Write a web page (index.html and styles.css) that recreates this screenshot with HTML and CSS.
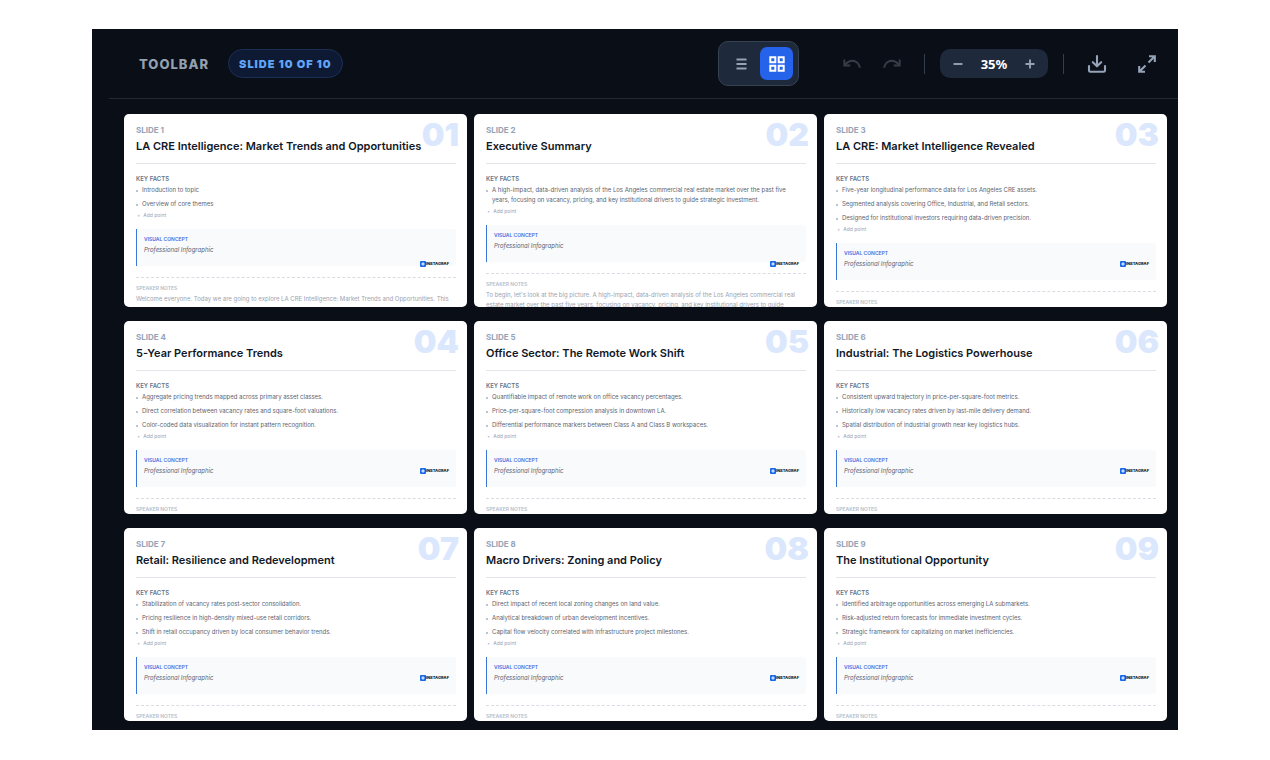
FILE: index.html
```html
<!DOCTYPE html>
<html lang="en">
<head>
<meta charset="utf-8">
<title>Slide overview</title>
<link rel="stylesheet" href="styles.css">
</head>
<body>
<svg class="defs" aria-hidden="true">
  <symbol id="brand" viewBox="0 0 6 6"><rect width="6" height="6" rx="1" fill="#1769e8"/><path d="M3 1.3v3.4M1.3 3h3.4" stroke="#fff" stroke-width="1"/></symbol>
</svg>
<main class="app">
  <header class="toolbar">
    <span class="toolbar-title">TOOLBAR</span>
    <span class="counter">SLIDE 10 OF 10</span>
    <div class="view-switch">
      <button class="view" type="button" aria-label="List view"><svg width="18" height="18" viewBox="0 0 18 18"><path d="M4.500 4.500h10M4.500 9h10M4.500 13.500h10" stroke="currentColor" stroke-width="1.900"/></svg></button>
      <button class="view active" type="button" aria-label="Grid view"><svg width="18" height="18" viewBox="0 0 18 18" fill="none" stroke="currentColor" stroke-width="2"><path d="M2.300 2.300h5v5H2.300zM10.700 2.300h5v5h-5zM2.300 10.700h5v5H2.300zM10.700 10.700h5v5h-5z"/></svg></button>
    </div>
    <div class="history">
      <button class="icon dim" type="button" aria-label="Undo"><svg width="20" height="20" viewBox="0 0 20 20" fill="none" stroke="currentColor" stroke-width="1.900"><path d="M2.300 5.500v6h6M2.800 11C5 8.300 7.500 6.800 10.200 6.800c3.800 0 6.600 2.700 7.800 7"/></svg></button>
      <button class="icon dim" type="button" aria-label="Redo"><svg width="20" height="20" viewBox="0 0 20 20" fill="none" stroke="currentColor" stroke-width="1.900"><path d="M17.700 5.500v6h-6M17.200 11C15 8.300 12.500 6.800 9.800 6.800c-3.800 0-6.600 2.700-7.800 7"/></svg></button>
    </div>
    <span class="separator"></span>
    <div class="zoom">
      <button class="step" type="button" aria-label="Zoom out"><svg width="12" height="12" viewBox="0 0 12 12"><path d="M1.500 6h9" stroke="currentColor" stroke-width="1.900"/></svg></button>
      <span class="zoom-value">35%</span>
      <button class="step" type="button" aria-label="Zoom in"><svg width="12" height="12" viewBox="0 0 12 12"><path d="M1.500 6h9M6 1.500v9" stroke="currentColor" stroke-width="1.900"/></svg></button>
    </div>
    <span class="separator"></span>
    <div class="actions">
      <button class="icon" type="button" aria-label="Download"><svg width="20" height="20" viewBox="0 0 20 20" fill="none" stroke="currentColor" stroke-width="2.100" stroke-linecap="round" stroke-linejoin="round"><path d="M10 2v10M5.800 8.200L10 12.300l4.200-4.100M2 12v4.500q0 1.300 1.300 1.300h13.400q1.300 0 1.300-1.300V12"/></svg></button>
      <button class="icon" type="button" aria-label="Full screen"><svg width="20" height="20" viewBox="0 0 20 20" fill="none" stroke="currentColor" stroke-width="2.100"><path d="M12 2.200h5.800V8M17.500 2.500L11.500 8.500M8 17.800H2.200V12M2.500 17.500L8.500 11.500"/></svg></button>
    </div>
  </header>

  <section class="slides">
    <article class="slide">
      <span class="number">01</span>
      <p class="label">SLIDE 1</p>
      <h2>LA CRE Intelligence: Market Trends and Opportunities</h2>
      <h3>KEY FACTS</h3>
      <ul><li>Introduction to topic</li><li>Overview of core themes</li></ul>
      <button class="add" type="button"><span>+</span>Add point</button>
      <div class="visual"><h4>VISUAL CONCEPT</h4><p>Professional Infographic</p></div>
      <div class="notes"><h5>SPEAKER NOTES</h5><p>Welcome everyone. Today we are going to explore LA CRE Intelligence: Market Trends and Opportunities. This</p></div>
      <div class="brand"><svg><use href="#brand"/></svg>INSTAGRAF</div>
    </article>
    <article class="slide">
      <span class="number">02</span>
      <p class="label">SLIDE 2</p>
      <h2>Executive Summary</h2>
      <h3>KEY FACTS</h3>
      <ul><li>A high-impact, data-driven analysis of the Los Angeles commercial real estate market over the past five years, focusing on vacancy, pricing, and key institutional drivers to guide strategic investment.</li></ul>
      <button class="add" type="button"><span>+</span>Add point</button>
      <div class="visual"><h4>VISUAL CONCEPT</h4><p>Professional Infographic</p></div>
      <div class="notes"><h5>SPEAKER NOTES</h5><p>To begin, let's look at the big picture. A high-impact, data-driven analysis of the Los Angeles commercial real estate market over the past five years, focusing on vacancy, pricing, and key institutional drivers to guide</p></div>
      <div class="brand"><svg><use href="#brand"/></svg>INSTAGRAF</div>
    </article>
    <article class="slide">
      <span class="number">03</span>
      <p class="label">SLIDE 3</p>
      <h2>LA CRE: Market Intelligence Revealed</h2>
      <h3>KEY FACTS</h3>
      <ul><li>Five-year longitudinal performance data for Los Angeles CRE assets.</li><li>Segmented analysis covering Office, Industrial, and Retail sectors.</li><li>Designed for institutional investors requiring data-driven precision.</li></ul>
      <button class="add" type="button"><span>+</span>Add point</button>
      <div class="visual"><h4>VISUAL CONCEPT</h4><p>Professional Infographic</p></div>
      <div class="notes"><h5>SPEAKER NOTES</h5></div>
      <div class="brand"><svg><use href="#brand"/></svg>INSTAGRAF</div>
    </article>
    <article class="slide">
      <span class="number">04</span>
      <p class="label">SLIDE 4</p>
      <h2>5-Year Performance Trends</h2>
      <h3>KEY FACTS</h3>
      <ul><li>Aggregate pricing trends mapped across primary asset classes.</li><li>Direct correlation between vacancy rates and square-foot valuations.</li><li>Color-coded data visualization for instant pattern recognition.</li></ul>
      <button class="add" type="button"><span>+</span>Add point</button>
      <div class="visual"><h4>VISUAL CONCEPT</h4><p>Professional Infographic</p></div>
      <div class="notes"><h5>SPEAKER NOTES</h5></div>
      <div class="brand"><svg><use href="#brand"/></svg>INSTAGRAF</div>
    </article>
    <article class="slide">
      <span class="number">05</span>
      <p class="label">SLIDE 5</p>
      <h2>Office Sector: The Remote Work Shift</h2>
      <h3>KEY FACTS</h3>
      <ul><li>Quantifiable impact of remote work on office vacancy percentages.</li><li>Price-per-square-foot compression analysis in downtown LA.</li><li>Differential performance markers between Class A and Class B workspaces.</li></ul>
      <button class="add" type="button"><span>+</span>Add point</button>
      <div class="visual"><h4>VISUAL CONCEPT</h4><p>Professional Infographic</p></div>
      <div class="notes"><h5>SPEAKER NOTES</h5></div>
      <div class="brand"><svg><use href="#brand"/></svg>INSTAGRAF</div>
    </article>
    <article class="slide">
      <span class="number">06</span>
      <p class="label">SLIDE 6</p>
      <h2>Industrial: The Logistics Powerhouse</h2>
      <h3>KEY FACTS</h3>
      <ul><li>Consistent upward trajectory in price-per-square-foot metrics.</li><li>Historically low vacancy rates driven by last-mile delivery demand.</li><li>Spatial distribution of industrial growth near key logistics hubs.</li></ul>
      <button class="add" type="button"><span>+</span>Add point</button>
      <div class="visual"><h4>VISUAL CONCEPT</h4><p>Professional Infographic</p></div>
      <div class="notes"><h5>SPEAKER NOTES</h5></div>
      <div class="brand"><svg><use href="#brand"/></svg>INSTAGRAF</div>
    </article>
    <article class="slide">
      <span class="number">07</span>
      <p class="label">SLIDE 7</p>
      <h2>Retail: Resilience and Redevelopment</h2>
      <h3>KEY FACTS</h3>
      <ul><li>Stabilization of vacancy rates post-sector consolidation.</li><li>Pricing resilience in high-density mixed-use retail corridors.</li><li>Shift in retail occupancy driven by local consumer behavior trends.</li></ul>
      <button class="add" type="button"><span>+</span>Add point</button>
      <div class="visual"><h4>VISUAL CONCEPT</h4><p>Professional Infographic</p></div>
      <div class="notes"><h5>SPEAKER NOTES</h5></div>
      <div class="brand"><svg><use href="#brand"/></svg>INSTAGRAF</div>
    </article>
    <article class="slide">
      <span class="number">08</span>
      <p class="label">SLIDE 8</p>
      <h2>Macro Drivers: Zoning and Policy</h2>
      <h3>KEY FACTS</h3>
      <ul><li>Direct impact of recent local zoning changes on land value.</li><li>Analytical breakdown of urban development incentives.</li><li>Capital flow velocity correlated with infrastructure project milestones.</li></ul>
      <button class="add" type="button"><span>+</span>Add point</button>
      <div class="visual"><h4>VISUAL CONCEPT</h4><p>Professional Infographic</p></div>
      <div class="notes"><h5>SPEAKER NOTES</h5></div>
      <div class="brand"><svg><use href="#brand"/></svg>INSTAGRAF</div>
    </article>
    <article class="slide">
      <span class="number">09</span>
      <p class="label">SLIDE 9</p>
      <h2>The Institutional Opportunity</h2>
      <h3>KEY FACTS</h3>
      <ul><li>Identified arbitrage opportunities across emerging LA submarkets.</li><li>Risk-adjusted return forecasts for immediate investment cycles.</li><li>Strategic framework for capitalizing on market inefficiencies.</li></ul>
      <button class="add" type="button"><span>+</span>Add point</button>
      <div class="visual"><h4>VISUAL CONCEPT</h4><p>Professional Infographic</p></div>
      <div class="notes"><h5>SPEAKER NOTES</h5></div>
      <div class="brand"><svg><use href="#brand"/></svg>INSTAGRAF</div>
    </article>
  </section>
</main>
</body>
</html>
```

FILE: styles.css
```css
* { box-sizing: border-box; }
body { margin: 0; padding: 29px 92px 30px; background: #fff; font-family: Inter, "Liberation Sans", sans-serif; }
h2, h3, h4, h5, p, ul { margin: 0; padding: 0; }
button { margin: 0; padding: 0; border: 0; background: none; font-family: inherit; color: inherit; cursor: pointer; }
svg { display: block; }
.defs { position: absolute; width: 0; height: 0; }

.app { padding: 0 0 9px 17px; background: #0a0e17; }
.toolbar { display: flex; align-items: center; height: 70px; padding: 0 21px 0 30px; border-bottom: 1px solid #222933; color: #94a3b8; }
.toolbar-title { margin-right: 19px; font-size: 13px; line-height: 16px; font-weight: 800; letter-spacing: 1px; color: #94a0b0; }
.counter { display: flex; align-items: center; height: 29px; padding: 0 10px; border: 1px solid #1b2f55; border-radius: 15px; background: #0e1a33; color: #60a5fa; font-size: 11px; font-weight: 900; letter-spacing: 1px; }
.view-switch { display: flex; gap: 3px; margin-left: auto; padding: 5px; border: 1px solid #364152; border-radius: 10px; background: #1e293b; }
.view { display: flex; align-items: center; justify-content: center; width: 33px; height: 33px; border-radius: 7px; }
.view.active { background: #2563eb; color: #fff; }
.history { display: flex; gap: 20px; margin: 0 22px 0 43px; }
.dim { color: #363d49; }
.separator { width: 1px; height: 20px; background: #333c49; }
.zoom { display: flex; align-items: center; justify-content: space-between; width: 108px; height: 29px; margin: 0 15px; padding: 0 12px; border-radius: 10px; background: #1e293b; }
.zoom-value { color: #fff; font-family: "Noto Sans", sans-serif; font-size: 13px; line-height: 16px; font-weight: 700; }
.actions { display: flex; gap: 30px; margin-left: 23px; }

.slides { display: grid; grid-template-columns: repeat(3, minmax(0, 1fr)); gap: 14px 7px; padding: 15px 11px 0 15px; }
.slide { position: relative; height: 193px; padding: 11px 11px 0 12px; overflow: hidden; border-radius: 5px; background: #fff; }
.number { position: absolute; top: 5px; right: 8px; font-size: 32px; line-height: 32px; font-weight: 900; color: #dbe7fd; }
.label { font-size: 8px; line-height: 10px; font-weight: 700; color: #94a3b8; }
.slide h2 { position: relative; padding: 4px 0 10px; border-bottom: 1px solid #e2e5ea; font-size: 11px; line-height: 14px; font-weight: 600; color: #111827; }
.slide h3 { padding: 11px 0 3px; font-size: 6px; line-height: 7px; font-weight: 600; color: #64748b; }
.slide ul { display: grid; gap: 4px; padding-right: 10px; list-style: none; }
.slide li { position: relative; padding-left: 6px; font-size: 6px; line-height: 10px; color: #5b6472; }
.slide li::before { content: ""; position: absolute; left: 0; top: 5px; width: 2px; height: 2px; border-radius: 1px; background: #a5b1c2; }
.add { display: flex; gap: 3px; height: 10px; margin: 1px 0 9px 1px; font-size: 5px; line-height: 10px; color: #94a3b8; }
.visual { height: 37px; padding: 7px 7px 0; border-left: 1px solid #3b76d9; border-radius: 0 3px 3px 0; background: #f8fafc; }
.visual h4 { font-size: 5px; line-height: 6px; font-weight: 600; color: #4f6be0; }
.visual p { padding-top: 3px; font-size: 6px; line-height: 10px; font-style: italic; color: #5b6472; }
.notes { margin-top: 11px; border-top: 1px dashed #d9dde3; color: #9ca3af; }
.notes h5 { padding: 7px 0 3px; font-size: 5px; line-height: 6px; font-weight: 600; color: #b4bcc9; }
.notes p { font-size: 6px; line-height: 10px; }
.brand { position: absolute; right: 18px; bottom: 40px; display: flex; align-items: center; font-size: 4px; line-height: 6px; font-weight: 800; color: #101828; }
.brand svg { width: 6px; height: 6px; }
```
